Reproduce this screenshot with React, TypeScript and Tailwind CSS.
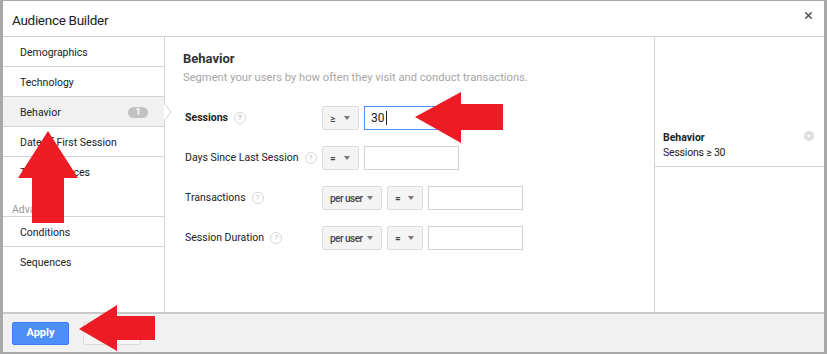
import { X } from 'lucide-react'

const font = { fontFamily: 'Roboto, "Liberation Sans", Arial, sans-serif' }

function Help() {
  return (
    <span className="ml-[6px] inline-flex h-[12px] w-[12px] items-center justify-center rounded-full border border-[#d6d6d6] text-[8px] leading-none text-[#c0c0c0]">
      ?
    </span>
  )
}

function Drop({ label, w }: { label: string; w: string }) {
  return (
    <div
      className={`flex h-full ${w} items-center justify-between whitespace-nowrap rounded-[2px] border border-[#dcdcdc] bg-[#f4f4f4] pl-[7px] pr-[8px] text-[10px] font-medium tracking-[-0.5px] text-[#444]`}
    >
      <span>{label}</span>
      <span className="h-0 w-0 border-x-[3px] border-t-[4px] border-x-transparent border-t-[#777]" />
    </div>
  )
}

function Input({ value, active }: { value?: string; active?: boolean }) {
  return (
    <div
      className={`flex h-full w-[95px] items-center border px-[6px] text-[12px] text-[#222] ${
        active ? 'border-[#4d90fe]' : 'border-[#d2d2d2]'
      }`}
    >
      {value}
      {active && <span className="ml-px h-[14px] w-px bg-[#222]" />}
    </div>
  )
}

function Row({ label, bold, children }: { label: string; bold?: boolean; children: React.ReactNode }) {
  return (
    <div className="flex h-6 items-center pl-[2px]">
      <div className={`flex w-[137px] items-center text-[10.5px] text-[#222] ${bold ? 'font-bold' : ''}`}>
        {label}
        <Help />
      </div>
      <div className="flex h-full gap-[5px]">{children}</div>
    </div>
  )
}

function NavItem({ label, selected, badge, last }: { label: string; selected?: boolean; badge?: string; last?: boolean }) {
  return (
    <div
      className={`relative flex h-[30px] items-center justify-between pl-[17px] pr-[16px] pt-[2px] text-[10.5px] text-[#222] ${
        last ? '' : 'border-b border-[#d4d4d4]'
      } ${selected ? 'bg-[#f1f1f1]' : ''}`}
    >
      <span>{label}</span>
      {badge && (
        <span className="flex h-[11px] w-[20px] items-center justify-center rounded-full bg-[#c2c2c2] text-[9px] font-bold leading-none text-white">
          {badge}
        </span>
      )}
      {selected && (
        <svg className="absolute -right-[8px] top-[6px]" width="8" height="18" viewBox="0 0 8 18">
          <path d="M0 0 L7 9 L0 18 Z" fill="#fff" />
          <path d="M0 0 L7 9 L0 18" fill="none" stroke="#d4d4d4" strokeWidth="1" />
        </svg>
      )}
    </div>
  )
}

export default function App() {
  return (
    <div
      className="relative flex h-[354px] w-[827px] flex-col overflow-hidden border-x-[3px] border-t border-b-2 border-[#a8a8a8] bg-white"
      style={font}
    >
      {/* header */}
      <div className="flex h-[36px] shrink-0 items-start justify-between border-b border-[#cfcfcf] pl-[9px] pr-[10px]">
        <span className="mt-[10px] text-[13.5px] leading-[18px] tracking-[-0.3px] text-[#222]">Audience Builder</span>
        <X className="mt-[9px] h-[11px] w-[11px] text-[#555]" strokeWidth={3.5} />
      </div>

      {/* body */}
      <div className="flex h-[275px] shrink-0">
        <div className="w-[162px] shrink-0 border-r border-[#d4d4d4]">
          <NavItem label="Demographics" />
          <NavItem label="Technology" />
          <NavItem label="Behavior" selected badge="1" />
          <NavItem label="Date of First Session" />
          <NavItem label="Traffic Sources" last />
          <div className="flex h-[30px] items-end border-b border-[#d4d4d4] pb-0 pl-[9px] text-[10.5px] leading-[12px] text-[#999]">
            Advanced
          </div>
          <NavItem label="Conditions" />
          <NavItem label="Sequences" last />
        </div>

        <div className="flex-1 px-[18px] pt-[14px]">
          <div className="text-[13px] font-bold leading-4 text-[#333]">Behavior</div>
          <div className="mt-[3px] text-[11.2px] leading-4 text-[#a6a6a6]">
            Segment your users by how often they visit and conduct transactions.
          </div>
          <div className="mt-[20px] flex flex-col gap-4">
            <Row label="Sessions" bold>
              <Drop label="≥" w="w-[37px]" />
              <Input value="30" active />
            </Row>
            <Row label="Days Since Last Session">
              <Drop label="=" w="w-[37px]" />
              <Input />
            </Row>
            <Row label="Transactions">
              <Drop label="per user" w="w-[60px]" />
              <Drop label="=" w="w-[36px]" />
              <Input />
            </Row>
            <Row label="Session Duration">
              <Drop label="per user" w="w-[60px]" />
              <Drop label="=" w="w-[36px]" />
              <Input />
            </Row>
          </div>
        </div>

        <div className="w-[170px] shrink-0 border-l border-[#d4d4d4]">
          <div className="relative flex h-[130px] flex-col justify-end border-b border-[#d4d4d4] pb-[6px] pl-[8px] text-[10.5px] leading-[15px] text-[#222]">
            <span className="font-bold">Behavior</span>
            <span className="tracking-[-0.2px]">Sessions ≥ 30</span>
            <span className="absolute right-[10px] top-[94px] flex h-[10px] w-[10px] items-center justify-center rounded-full bg-[#dedede]">
              <X className="h-[6px] w-[6px] text-white" strokeWidth={4} />
            </span>
          </div>
        </div>
      </div>

      {/* footer */}
      <div className="flex flex-1 items-center gap-[14px] border-t-2 border-[#cacaca] bg-[#f1f1f1] pl-[9px]">
        <div className="flex h-[23px] w-[57px] items-center justify-center rounded-[2px] border border-[#3b7cf0] bg-[#4d8ff9] text-[11px] font-bold text-white">
          Apply
        </div>
        <div className="flex h-[23px] w-[58px] items-center justify-center rounded-[2px] border border-[#dcdcdc] bg-[#f5f5f5] text-[11px] font-bold text-[#444]">
          Cancel
        </div>
      </div>

      {/* red annotation arrows */}
      <svg className="pointer-events-none absolute -left-[3px] -top-px" width="827" height="354" viewBox="0 0 827 354">
        <polygon points="415,117 461,92 461,104 503,104 503,130 461,130 461,143" fill="#ed1c24" />
        <polygon points="48,131 78,178 64,178 64,223 32,223 32,178 18,178" fill="#ed1c24" />
        <polygon points="79,329 117,305 117,316 155,316 155,340 117,340 117,351" fill="#ed1c24" />
      </svg>
    </div>
  )
}
